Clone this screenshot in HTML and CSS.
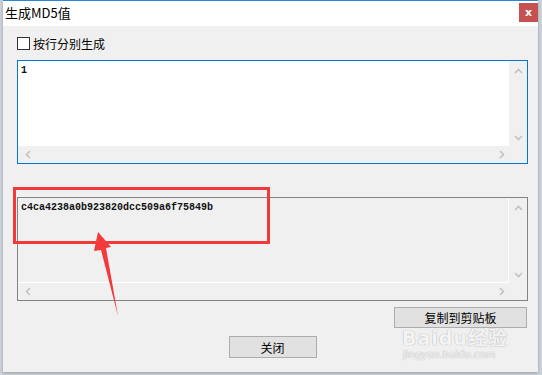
FILE: index.html
```html
<!DOCTYPE html>
<html lang="zh-CN">
<head>
    <meta charset="UTF-8">
    <title>生成MD5值</title>
    <link rel="stylesheet" href="styles.css">
</head>
<body>
    <div class="window">
        <div class="titlebar">
            <span class="title">生成MD5值</span>
            <button class="close-x">x</button>
        </div>

        <div class="content">
            <label class="check-row">
                <span class="checkbox"></span>
                <span>按行分别生成</span>
            </label>

            <div class="textbox focused">
                <div class="text-area">1</div>
                <div class="vscroll">
                    <svg width="9" height="6" viewBox="0 0 9 6"><polyline points="1,5 4.5,1.5 8,5" /></svg>
                    <svg width="9" height="6" viewBox="0 0 9 6"><polyline points="1,1 4.5,4.5 8,1" /></svg>
                </div>
                <div class="hscroll">
                    <svg width="6" height="9" viewBox="0 0 6 9"><polyline points="5,1 1.5,4.5 5,8" /></svg>
                    <svg width="6" height="9" viewBox="0 0 6 9"><polyline points="1,1 4.5,4.5 1,8" /></svg>
                </div>
            </div>

            <div class="textbox readonly">
                <div class="text-area">c4ca4238a0b923820dcc509a6f75849b</div>
                <div class="vscroll">
                    <svg width="9" height="6" viewBox="0 0 9 6"><polyline points="1,5 4.5,1.5 8,5" /></svg>
                    <svg width="9" height="6" viewBox="0 0 9 6"><polyline points="1,1 4.5,4.5 8,1" /></svg>
                </div>
                <div class="hscroll">
                    <svg width="6" height="9" viewBox="0 0 6 9"><polyline points="5,1 1.5,4.5 5,8" /></svg>
                    <svg width="6" height="9" viewBox="0 0 6 9"><polyline points="1,1 4.5,4.5 1,8" /></svg>
                </div>
            </div>

            <div class="copy-row">
                <button class="btn copy-btn">复制到剪贴板</button>
            </div>

            <div class="close-row">
                <button class="btn close-btn">关闭</button>
            </div>
        </div>
    </div>

    <!-- screenshot annotation: red box + arrow -->
    <svg class="annotation" width="542" height="375" viewBox="0 0 542 375">
        <rect x="14.5" y="188.5" width="254" height="54" fill="none" stroke="#f23a3a" stroke-width="3" />
        <polygon points="98,232 111,247 106,248 118,316 101,250 94,251" fill="#f23a3a" />
    </svg>

    <div class="watermark">
        <div class="wm-logo">Bai<span class="wm-du">du</span>经验</div>
        <div class="wm-url">jingyan.baidu.com</div>
    </div>
</body>
</html>
```

FILE: styles.css
```css
body {
    margin: 0;
    width: 542px;
    height: 375px;
    overflow: hidden;
    background: #cdd1da;
    font-family: "Noto Sans CJK SC", "Noto Sans", sans-serif;
    font-size: 12px;
    color: #000;
    position: relative;
}

.window {
    width: 535px;
    height: 372px;
    margin-left: 3px;
    background: #f0f0f0;
    display: flex;
    flex-direction: column;
    box-shadow: 0 1px 3px rgba(0, 0, 0, 0.25);
}

.titlebar {
    height: 25px;
    border-top: 1px solid #2b88d8;
    background: #fff;
    display: flex;
    justify-content: space-between;
    align-items: flex-start;
    padding-left: 2px;
}

.title {
    font-size: 13px;
    line-height: 24px;
}

.close-x {
    width: 19px;
    height: 19px;
    margin-top: 2px;
    background: #c75050;
    border: none;
    padding: 0;
    color: #fff;
    font-family: "DejaVu Sans", sans-serif;
    font-weight: bold;
    font-size: 11px;
    line-height: 17px;
}

.content {
    display: flex;
    flex-direction: column;
    padding: 11px 10px 0 14px;
}

.check-row {
    display: flex;
    align-items: center;
    gap: 3px;
    height: 13px;
    line-height: 13px;
}

.checkbox {
    width: 11px;
    height: 11px;
    border: 1px solid #333;
    background: #fff;
}

.textbox {
    height: 104px;
    box-sizing: border-box;
    display: grid;
    grid-template-columns: 1fr 18px;
    grid-template-rows: 1fr 17px;
}

.textbox.focused {
    margin-top: 10px;
    border: 1px solid #0078d7;
}

.textbox.readonly {
    margin-top: 33px;
    border: 1px solid #838383;
}

.text-area {
    background: #fff;
    padding: 3px 3px;
    font-family: "Liberation Mono", monospace;
    font-weight: bold;
    font-size: 10px;
    line-height: 13px;
    color: #111;
}

.readonly .text-area {
    background: #f0f0f0;
    border-right: 1px solid #fff;
    border-bottom: 1px solid #fff;
}

.vscroll {
    display: flex;
    flex-direction: column;
    justify-content: space-between;
    align-items: center;
    padding: 7px 0 5px;
}

.hscroll {
    grid-column: 1 / 3;
    display: flex;
    justify-content: space-between;
    align-items: center;
    padding: 0 22px 0 7px;
}

.vscroll svg polyline,
.hscroll svg polyline {
    fill: none;
    stroke: #c2c2c2;
    stroke-width: 1.6;
}

.copy-row {
    display: flex;
    justify-content: flex-end;
    margin-top: 6px;
    padding-right: 1px;
}

.btn {
    background: #e1e1e1;
    border: 1px solid #adadad;
    font-family: "Noto Sans CJK SC", sans-serif;
    font-size: 12px;
    color: #000;
    padding: 0;
}

.copy-btn {
    width: 133px;
    height: 21px;
}

.close-row {
    display: flex;
    justify-content: center;
    margin-top: 8px;
}

.close-btn {
    width: 88px;
    height: 22px;
}

.annotation {
    position: absolute;
    top: 0;
    left: 0;
    pointer-events: none;
}

.watermark {
    position: absolute;
    left: 402px;
    top: 327px;
    color: rgba(255, 255, 255, 0.85);
    text-shadow: 0 0 1px #b8b8b8, 0 0 1px #b8b8b8;
    pointer-events: none;
}

.wm-logo {
    font-family: "DejaVu Sans", sans-serif;
    font-weight: bold;
    font-size: 19px;
    line-height: 22px;
    letter-spacing: 1px;
}

.wm-url {
    font-family: "DejaVu Sans", sans-serif;
    font-size: 10px;
    line-height: 12px;
    padding-left: 1px;
}
```
